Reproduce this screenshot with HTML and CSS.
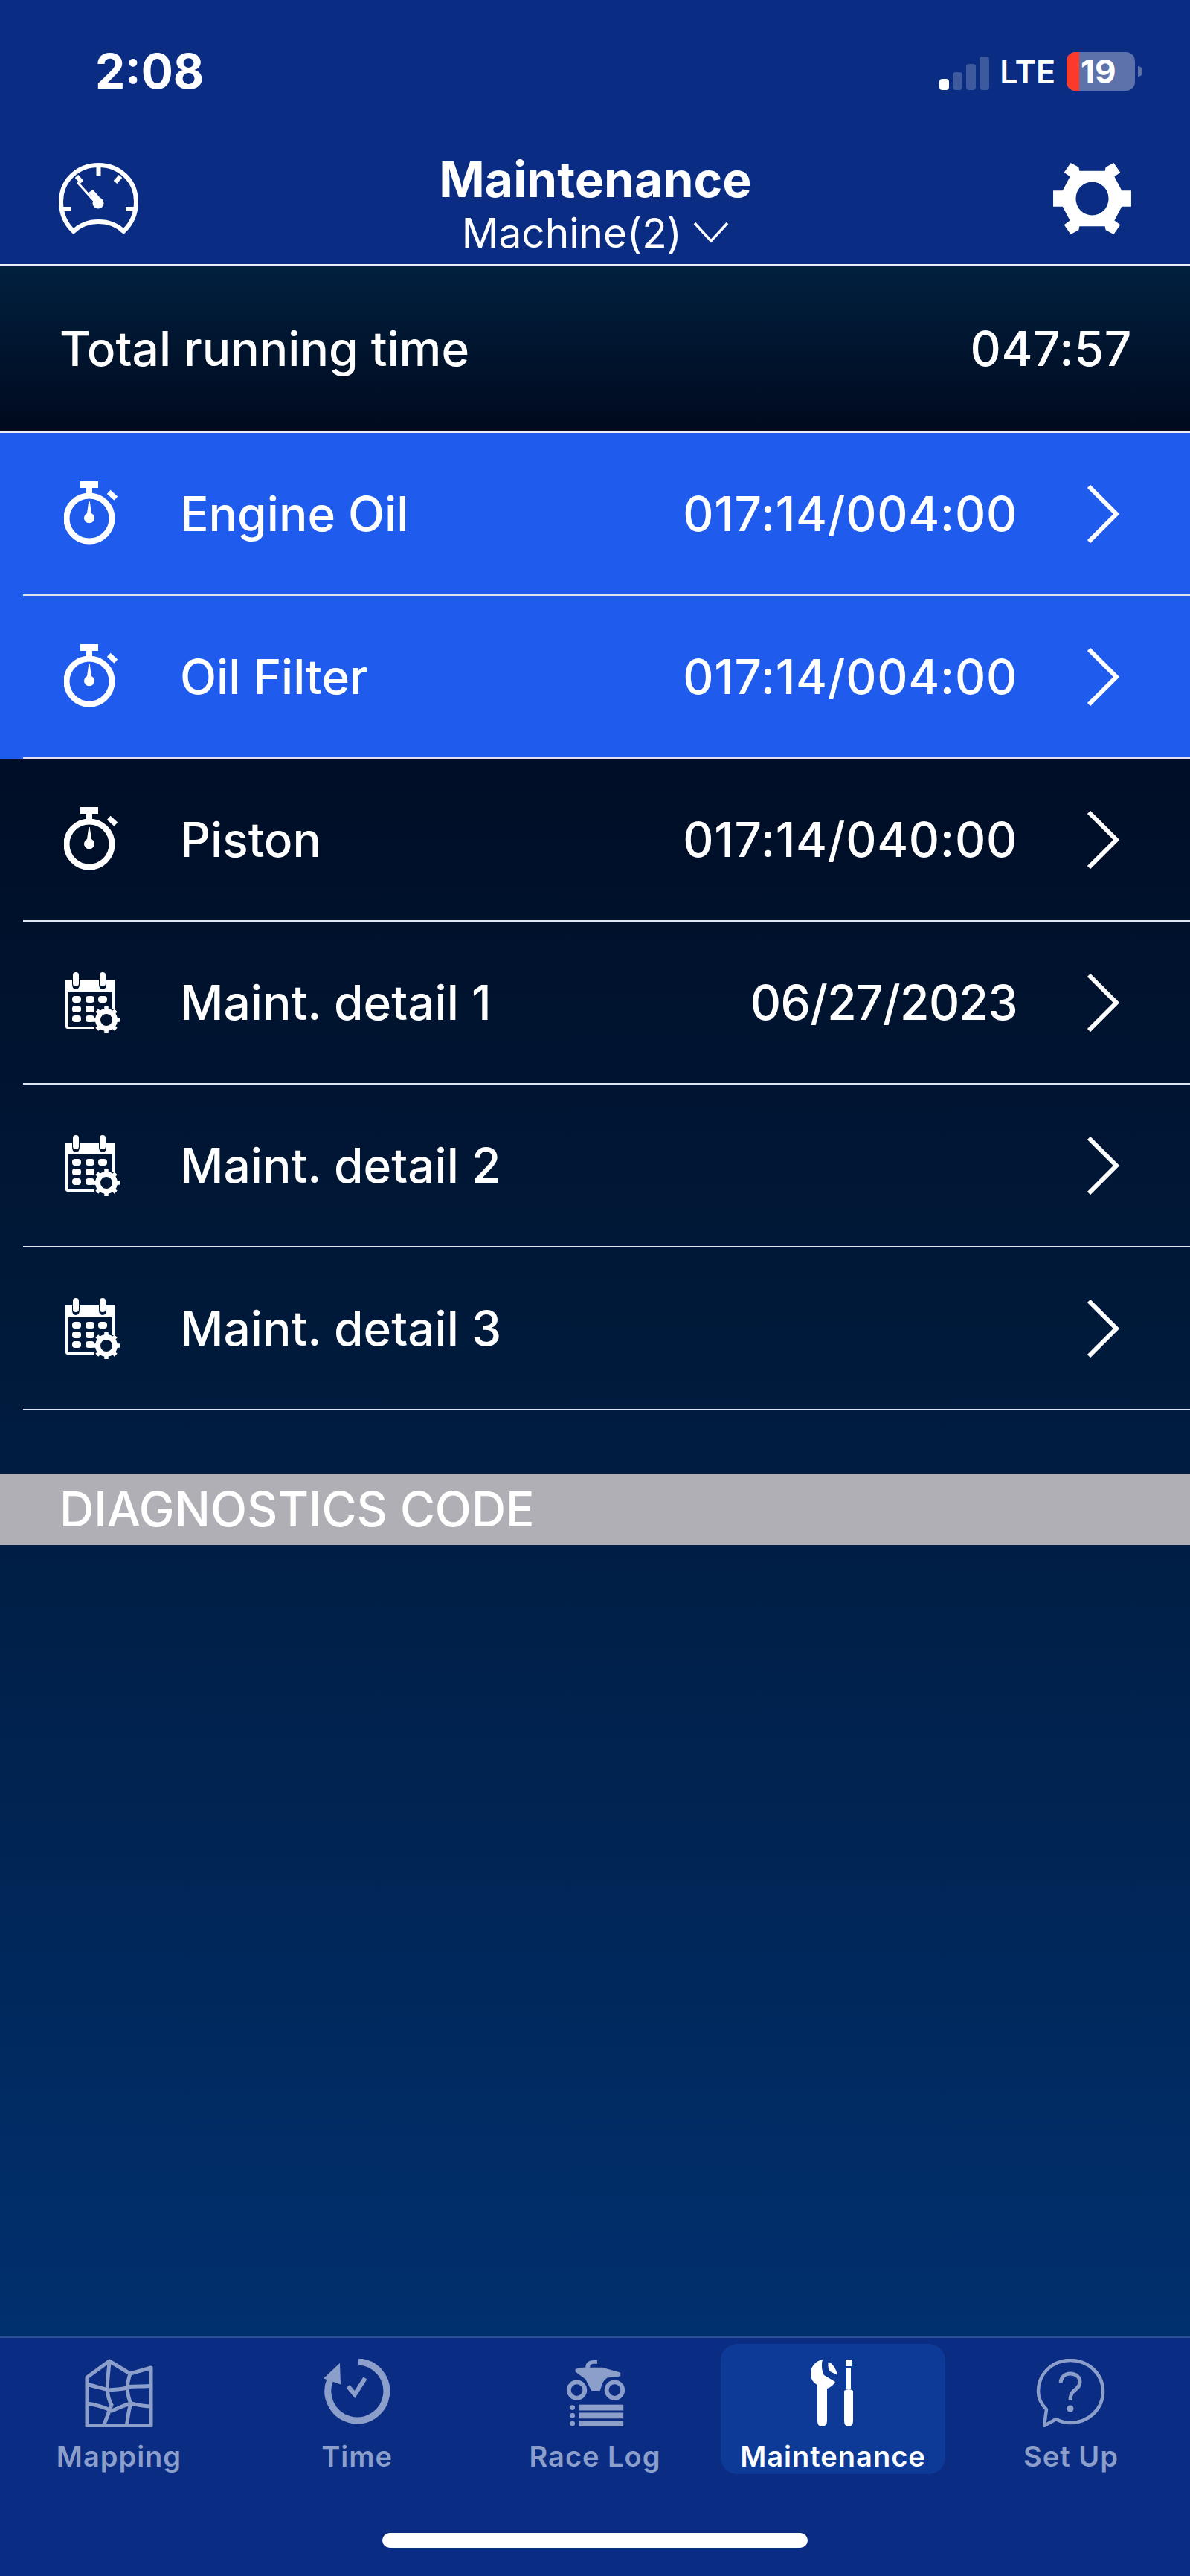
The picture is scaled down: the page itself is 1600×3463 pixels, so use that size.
FILE: index.html
```html
<!DOCTYPE html>
<html lang="en">
<head>
    <meta charset="UTF-8">
    <meta name="viewport" content="width=device-width, initial-scale=1.0">
    <title>Maintenance</title>
    <link rel="stylesheet" href="styles.css">
</head>
<body>

    <svg class="defs">
        <symbol id="watch" viewBox="0 0 76 88">
            <rect x="22" y="0" width="24" height="9" fill="#fff"/>
            <rect x="30" y="9" width="8" height="10" fill="#fff"/>
            <rect x="59" y="15" width="13" height="7" transform="rotate(42 65 18)" fill="#fff"/>
            <circle cx="34" cy="50" r="30.5" fill="none" stroke="#fff" stroke-width="8"/>
            <path d="M33.300 27 L34.700 27 L37 43 A7 7 0 1 1 31 43 Z" fill="#fff"/>
        </symbol>
        <symbol id="cal" viewBox="0 0 76 82">
            <path d="M2 10 H11 V16 Q11 23 16 23 Q21 23 21 16 V10 H47 V16 Q47 23 52 23 Q57 23 57 16 V10 H68 V50 H65 V26 H6 V73 H41 V76 H5 Q2 76 2 73 Z" fill="#fff"/>
            <rect x="12" y="0" width="8" height="19" rx="4" fill="#fff"/>
            <rect x="48" y="0" width="8" height="19" rx="4" fill="#fff"/>
            <rect x="11" y="32" width="12" height="9" rx="4" fill="#fff"/>
            <rect x="29" y="32" width="12" height="9" rx="4" fill="#fff"/>
            <rect x="46" y="32" width="12" height="9" rx="4" fill="#fff"/>
            <rect x="11" y="45" width="12" height="9" rx="4" fill="#fff"/>
            <rect x="29" y="45" width="12" height="9" rx="4" fill="#fff"/>
            <rect x="11" y="58" width="12" height="9" rx="4" fill="#fff"/>
            <rect x="29" y="58" width="12" height="9" rx="4" fill="#fff"/>
            <circle cx="57" cy="64" r="11.500" fill="none" stroke="#fff" stroke-width="7"/>
            <g stroke="#fff" stroke-width="5.500">
                <path d="M57 46 V52 M57 76 V82 M39 64 H45 M69 64 H75 M44.300 51.300 L48.500 55.500 M65.500 72.500 L69.700 76.700 M44.300 76.700 L48.500 72.500 M65.500 55.500 L69.700 51.300"/>
            </g>
        </symbol>
        <symbol id="chev" viewBox="0 0 44 78">
            <path d="M3 2 L40 39 L3 76" fill="none" stroke="#fff" stroke-width="6"/>
        </symbol>
    </svg>

    <div class="top">
        <div class="status">
            <span class="clock">2:08</span>
            <div class="status-right">
                <div class="signal">
                    <i class="bar on"></i><i class="bar b2"></i><i class="bar b3"></i><i class="bar b4"></i>
                </div>
                <span class="lte">LTE</span>
                <div class="battery"><i class="battery-low"></i><span>19</span></div>
                <i class="battery-tip"></i>
            </div>
        </div>
        <div class="nav">
            <svg class="nav-icon" viewBox="0 0 107 96" fill="none" stroke="#fff">
                <path d="M20 92 C7 80 3 66 3 52 C3 24 25 3 53.500 3 C82 3 104 24 104 52 C104 66 100 80 87 92 C78 83 67 79 53.500 79 C40 79 29 83 20 92 Z" stroke-width="6" stroke-linejoin="round"/>
                <path d="M53.500 4 V17 M24 18 L31 26 M83 18 L76 26 M6 62 H17 M101 62 H90" stroke-width="6"/>
                <path d="M25 26 L52 56" stroke-width="3"/>
                <path d="M40 40 L46 36 L60 52 L53 58 Z" fill="#fff" stroke="none"/>
                <circle cx="53" cy="54" r="7.500" fill="#fff" stroke="none"/>
            </svg>
            <div class="nav-title">
                <div class="nav-main">Maintenance</div>
                <div class="nav-sub">Machine(2)
                    <svg class="nav-caret" viewBox="0 0 48 30"><path d="M2 3 L24 27 L46 3" fill="none" stroke="#fff" stroke-width="3.500"/></svg>
                </div>
            </div>
            <svg class="nav-icon" viewBox="0 0 107 102">
                <path fill-rule="evenodd" fill="#fff" d="M24 2 L35 8 L36 13 H71 L72 8 L83 2 L92 15 L84 21 L94 40 H107 V62 H94 L84 81 L92 87 L83 100 L72 94 L71 89 H36 L35 94 L24 100 L15 87 L23 81 L13 62 H0 V40 H13 L23 21 L15 15 Z M53.500 28 A22.500 23 0 1 0 53.500 74 A22.500 23 0 1 0 53.500 28 Z"/>
            </svg>
        </div>
    </div>

    <div class="total">
        <span>Total running time</span>
        <span class="nums">047:57</span>
    </div>

    <main class="content">
        <div class="list">
            <div class="row row-alert">
                <div class="row-inner">
                    <svg class="row-icon"><use href="#watch"/></svg>
                    <span class="row-label">Engine Oil</span>
                    <span class="row-value nums">017:14/004:00</span>
                    <svg class="row-chev"><use href="#chev"/></svg>
                </div>
            </div>
            <div class="row row-alert">
                <div class="row-inner">
                    <svg class="row-icon"><use href="#watch"/></svg>
                    <span class="row-label">Oil Filter</span>
                    <span class="row-value nums">017:14/004:00</span>
                    <svg class="row-chev"><use href="#chev"/></svg>
                </div>
            </div>
            <div class="row">
                <div class="row-inner">
                    <svg class="row-icon"><use href="#watch"/></svg>
                    <span class="row-label">Piston</span>
                    <span class="row-value nums">017:14/040:00</span>
                    <svg class="row-chev"><use href="#chev"/></svg>
                </div>
            </div>
            <div class="row">
                <div class="row-inner">
                    <svg class="row-icon"><use href="#cal"/></svg>
                    <span class="row-label">Maint. detail 1</span>
                    <span class="row-value date">06/27/2023</span>
                    <svg class="row-chev"><use href="#chev"/></svg>
                </div>
            </div>
            <div class="row">
                <div class="row-inner">
                    <svg class="row-icon"><use href="#cal"/></svg>
                    <span class="row-label">Maint. detail 2</span>
                    <span class="row-value"></span>
                    <svg class="row-chev"><use href="#chev"/></svg>
                </div>
            </div>
            <div class="row">
                <div class="row-inner">
                    <svg class="row-icon"><use href="#cal"/></svg>
                    <span class="row-label">Maint. detail 3</span>
                    <span class="row-value"></span>
                    <svg class="row-chev"><use href="#chev"/></svg>
                </div>
            </div>
        </div>
        <div class="section">DIAGNOSTICS CODE</div>
    </main>

    <nav class="tabs">
        <div class="tab">
            <svg class="tab-icon" viewBox="0 0 100 92" fill="none" stroke="#8c9fcb" stroke-width="5">
                <path d="M7 90 V25 L37 3 L65 20 L93 12 V90 Z" stroke-linejoin="round"/>
                <path d="M37 3 C36 25 30 45 40 62 C36 72 33 82 29 90 M65 20 C62 30 58 42 66 60 C62 72 62 82 60 90"/>
                <path d="M7 34 C20 38 30 40 36 42 C48 40 55 42 62 38 C72 36 85 38 93 36 M7 60 C22 62 32 66 40 70 C50 66 58 62 66 60 C75 62 85 64 93 64"/>
            </svg>
            <span class="tab-label">Mapping</span>
        </div>
        <div class="tab">
            <svg class="tab-icon" viewBox="0 0 100 92" fill="none" stroke="#8c9fcb">
                <path d="M52 4 A39.500 39.500 0 1 1 14 28" stroke-width="9"/>
                <path d="M7 26 L26 8 L27 33 Z" fill="#8c9fcb" stroke-width="2"/>
                <path d="M38 37 L47 48 L61 26" stroke-width="6"/>
            </svg>
            <span class="tab-label">Time</span>
        </div>
        <div class="tab">
            <svg class="tab-icon" viewBox="0 0 100 94" fill="#8c9fcb">
                <circle cx="25" cy="43" r="11" fill="none" stroke="#8c9fcb" stroke-width="6"/>
                <circle cx="77" cy="43" r="11" fill="none" stroke="#8c9fcb" stroke-width="6"/>
                <path d="M23 14 L33 12 H37 C37 5 42 2 48 2 H53 V7 H49 C45 7 43 9 43 12 H60 L85 19 V24 L67 26 C60 30 59 38 57 44 H45 L37 28 L23 18 Z"/>
                <circle cx="19" cy="67" r="3.500"/>
                <circle cx="19" cy="78" r="3.500"/>
                <circle cx="19" cy="89" r="3.500"/>
                <rect x="28" y="63" width="61" height="8"/>
                <rect x="28" y="74" width="61" height="8"/>
                <rect x="28" y="85" width="61" height="8"/>
            </svg>
            <span class="tab-label">Race Log</span>
        </div>
        <div class="tab tab-active">
            <svg class="tab-icon" viewBox="0 0 100 92" fill="#fff">
                <path d="M36 1 C26 3 20 11 20 20 C20 27 23 32 29 35 V83 Q29 91 35 91 Q42 91 42 83 V40 C48 38 51 34 53 31 L38 22 C35 17 34 8 36 1 Z"/>
                <path d="M44 4 C50 7 54 13 56 22 L46 17 C43 12 43 8 44 4 Z"/>
                <rect x="67" y="1" width="8" height="9"/>
                <rect x="68" y="12" width="6" height="29"/>
                <path d="M65 43 Q71 39 77 43 V83 Q77 91 71 91 Q65 91 65 83 Z"/>
            </svg>
            <span class="tab-label">Maintenance</span>
        </div>
        <div class="tab">
            <svg class="tab-icon" viewBox="0 0 100 92" fill="none" stroke="#8c9fcb" stroke-width="4.500">
                <path d="M14 90 L17 68 C9 60 6 52 6 44 C6 20 25 2 49 2 C73 2 93 20 93 44 C93 68 73 86 49 86 C41 86 35 84 30 81 Z" stroke-linejoin="round"/>
                <path d="M36 32 C37 24 42 20 49 20 C57 20 62 25 62 31 C62 38 57 40 53 44 C50 47 49 50 49 56" stroke-width="5"/>
                <circle cx="49" cy="67" r="4.500" fill="#8c9fcb" stroke="none"/>
            </svg>
            <span class="tab-label">Set Up</span>
        </div>
    </nav>
    <div class="home"><i class="home-bar"></i></div>

</body>
</html>
```

FILE: styles.css
```css
* {
    box-sizing: border-box;
}

html, body {
    margin: 0;
    height: 3463px;
}

body {
    font-family: Inter, "Liberation Sans", sans-serif;
    color: white;
    background-color: #0a2c82;
    display: flex;
    flex-direction: column;
    overflow: hidden;
}

.defs {
    display: none;
}

.top {
    height: 358px;
    border-bottom: 3px solid #e8edf6;
    background-color: #0a2c82;
}

.status {
    height: 170px;
    padding: 0 64px 0 128px;
    display: flex;
    justify-content: space-between;
    align-items: flex-start;
}

.clock {
    margin-top: 60px;
    font-size: 64px;
    line-height: 72px;
    font-weight: 700;
}

.status-right {
    margin-top: 70px;
    display: flex;
    align-items: center;
    height: 52px;
}

.signal {
    display: flex;
    align-items: flex-end;
    gap: 5px;
    height: 47px;
    margin-right: 14px;
    margin-top: 2px;
}

.bar {
    width: 13px;
    border-radius: 4px;
    background-color: #3d5a9e;
}

.bar.on {
    height: 15px;
    background-color: white;
}

.b2 {
    height: 24px;
}

.b3 {
    height: 35px;
}

.b4 {
    height: 45px;
}

.lte {
    font-size: 43px;
    font-weight: 600;
    margin-right: 15px;
}

.battery {
    position: relative;
    width: 92px;
    height: 52px;
    border-radius: 12px;
    background-color: #5d72ab;
    font-size: 44px;
    font-weight: 700;
    line-height: 52px;
    padding-left: 19px;
}

.battery span {
    position: relative;
}

.battery-low {
    position: absolute;
    left: 0;
    top: 0;
    bottom: 0;
    width: 17px;
    border-radius: 12px 0 0 12px;
    background-color: #fb3a2c;
}

.battery-tip {
    width: 6px;
    height: 14px;
    margin-left: 4px;
    border-radius: 0 7px 7px 0;
    background-color: #5d72ab;
}

.nav {
    height: 185px;
    padding: 45px 78px 0 79px;
    display: flex;
    justify-content: space-between;
    align-items: flex-start;
}

.nav-icon {
    width: 107px;
    height: 100px;
    margin-top: 2px;
}

.nav-title {
    text-align: center;
    margin-top: -16px;
}

.nav-main {
    font-size: 66px;
    line-height: 84px;
    font-weight: 700;
}

.nav-sub {
    font-size: 55px;
    line-height: 60px;
}

.nav-caret {
    width: 48px;
    height: 30px;
    vertical-align: 6px;
}

.total {
    height: 224px;
    padding: 0 78px 0 80px;
    border-bottom: 3px solid #e8edf6;
    background: linear-gradient(#01203f, #010a1e);
    display: flex;
    justify-content: space-between;
    align-items: center;
    font-size: 64px;
    font-weight: 500;
}

.nums {
    letter-spacing: 0.7px;
}

.date {
    letter-spacing: -0.6px;
}

.content {
    flex: 1;
    background: linear-gradient(#000b20 0%, #000f28 20%, #001b3d 51%, #01306f 100%);
    display: flex;
    flex-direction: column;
}

.row {
    height: 219px;
    padding-left: 31px;
}

.row-alert {
    background-color: #1f5bec;
}

.row-inner {
    height: 100%;
    padding-left: 55px;
    border-bottom: 2px solid #dfe6f2;
    display: flex;
    align-items: center;
}

.row-icon {
    width: 76px;
    height: 88px;
    flex-shrink: 0;
}

.row-label {
    margin-left: 80px;
    font-size: 64px;
    font-weight: 500;
}

.row-value {
    margin-left: auto;
    margin-right: -2px;
    font-size: 64px;
    font-weight: 500;
}

.row-chev {
    width: 44px;
    height: 78px;
    margin: 0 95px;
    flex-shrink: 0;
}

.section {
    margin-top: 85px;
    height: 96px;
    padding-left: 80px;
    background-color: #b0afb5;
    font-size: 64px;
    font-weight: 500;
    line-height: 96px;
}

.tabs {
    height: 192px;
    padding-top: 8px;
    border-top: 2px solid #2a5195;
    background-color: #0a2c82;
    display: grid;
    grid-template-columns: repeat(5, 1fr);
}

.tab {
    width: 302px;
    height: 175px;
    justify-self: center;
    padding-top: 20px;
    border-radius: 22px;
    display: flex;
    flex-direction: column;
    align-items: center;
    color: #8c9fcb;
}

.tab-active {
    background-color: #0c3a96;
    color: white;
}

.tab-icon {
    width: 100px;
    height: 92px;
    flex-shrink: 0;
}

.tab-label {
    margin-top: 16px;
    font-size: 38px;
    line-height: 46px;
    font-weight: 600;
    letter-spacing: 1px;
}

.home {
    height: 130px;
    padding-top: 0;
    background-color: #0a2c82;
    display: flex;
    justify-content: center;
}

.home-bar {
    width: 572px;
    height: 20px;
    margin-top: 72px;
    border-radius: 10px;
    background-color: white;
}
```
